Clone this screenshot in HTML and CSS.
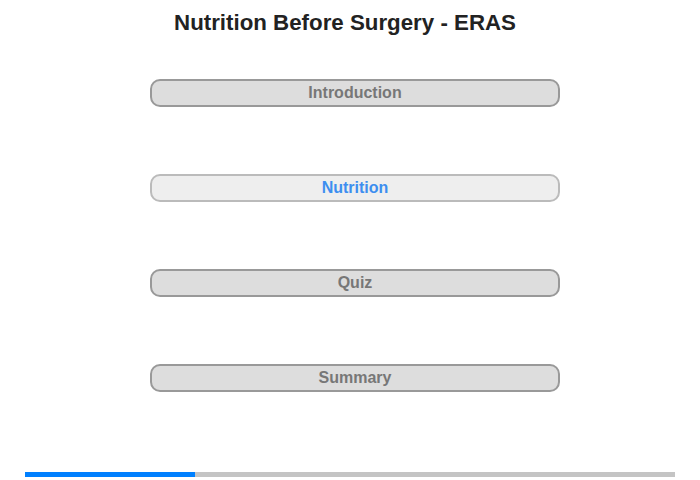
FILE: index.html
```html
<!DOCTYPE html>
<html>
<head>
<meta charset="utf-8">
<link rel="stylesheet" href="styles.css">
</head>
<body>
<div class="page">
  <h1 class="title">Nutrition Before Surgery - ERAS</h1>
  <nav class="menu">
    <div class="item">Introduction</div>
    <div class="item active">Nutrition</div>
    <div class="item">Quiz</div>
    <div class="item">Summary</div>
  </nav>
  <div class="progress"><div class="progress-fill" style="width: 26.2%"></div></div>
</div>
</body>
</html>
```
FILE: styles.css
```css
html, body {
  margin: 0;
  padding: 0;
  background: #fff;
}
.page {
  width: 700px;
  height: 480px;
  font-family: "Liberation Sans", Arial, sans-serif;
  display: flex;
  flex-direction: column;
}
.title {
  margin: 0;
  padding: 10px 10px 0 0;
  text-align: center;
  font-size: 22.3px;
  line-height: 26px;
  font-weight: bold;
  color: #222;
}
.menu {
  display: flex;
  flex-direction: column;
  gap: 67px;
  margin: 43px 0 0 150px;
  width: 410px;
}
.item {
  box-sizing: border-box;
  height: 28px;
  border: 2px solid #999;
  border-radius: 10px;
  background: #ddd;
  color: #777;
  font-size: 16px;
  font-weight: bold;
  line-height: 24px;
  text-align: center;
}
.item.active {
  border-color: #bbb;
  background: #eee;
  color: #3d8ef0;
}
.progress {
  margin: auto 25px 3px 25px;
  height: 5px;
  background: #c4c4c4;
}
.progress-fill {
  height: 100%;
  background: #0080ff;
}
```
